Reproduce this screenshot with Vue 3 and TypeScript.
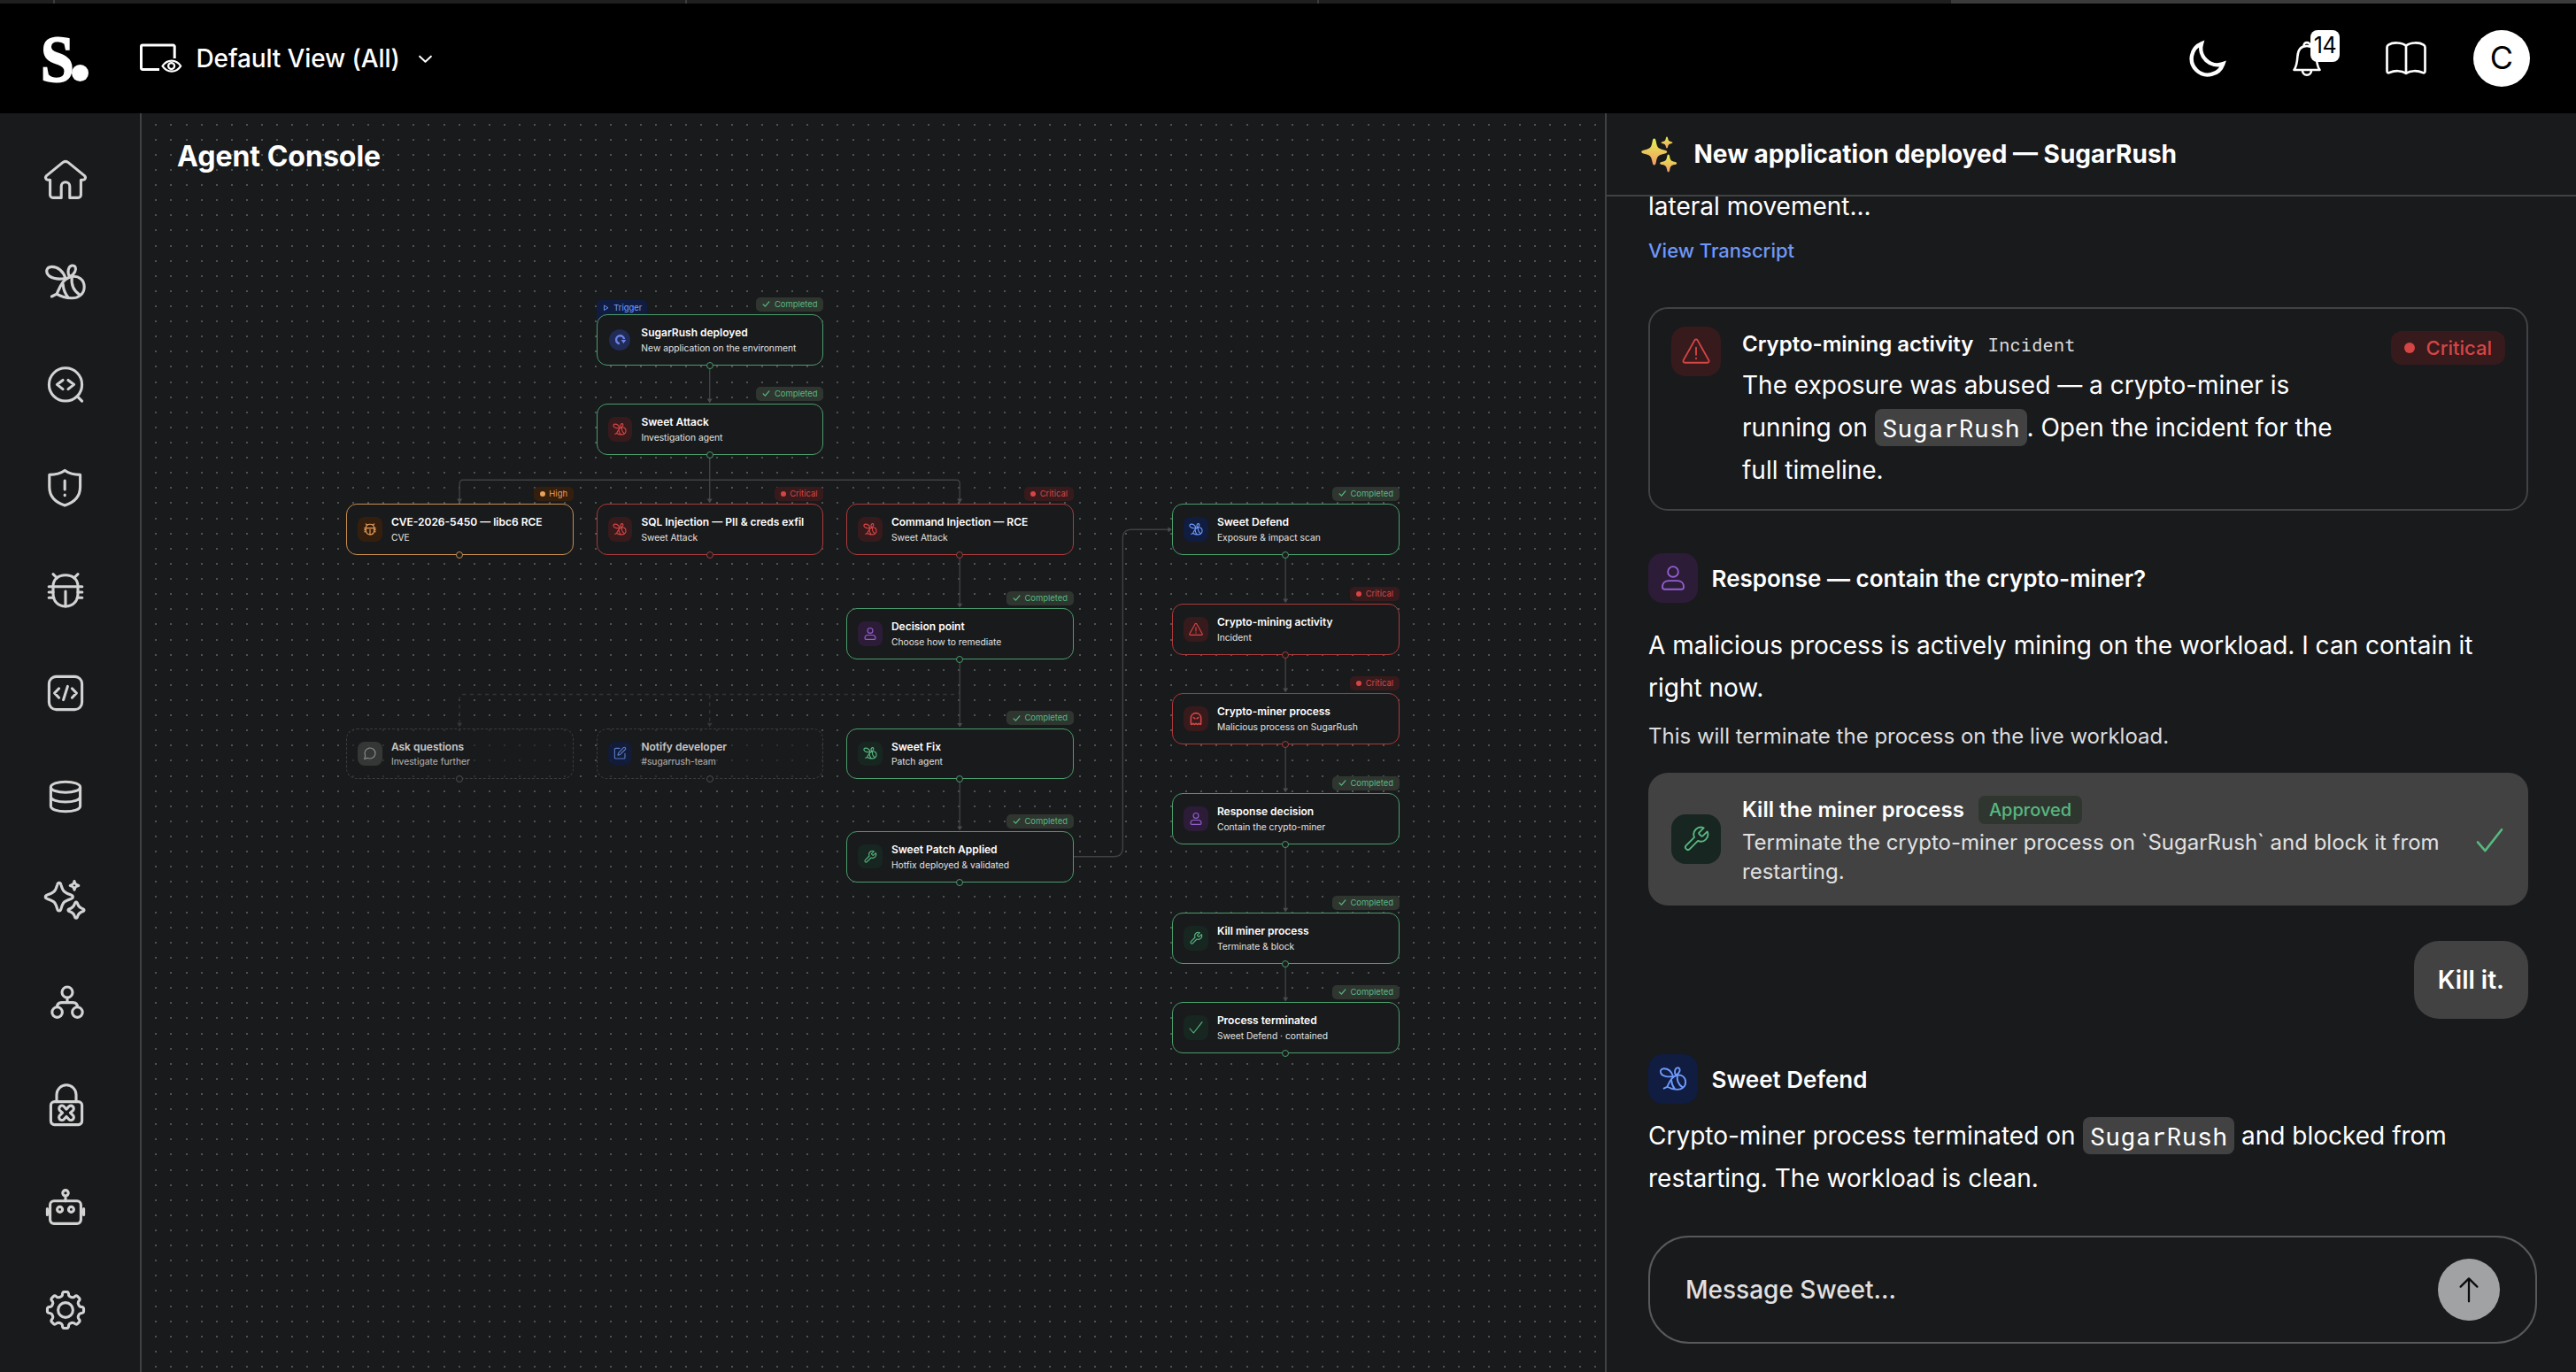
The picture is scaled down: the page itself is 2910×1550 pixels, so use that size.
<script setup lang="ts">
import { h } from 'vue'

/* ---------- icons (24 unit grid, stroked) ---------- */
const gear = (): string => {
  const pts: string[] = []
  const n = 8
  const step = (Math.PI * 2) / n
  const at = (r: number, a: number) => `${(12 + r * Math.cos(a)).toFixed(2)} ${(12 + r * Math.sin(a)).toFixed(2)}`
  for (let i = 0; i < n; i++) {
    const a = i * step - Math.PI / 2
    pts.push(`${i ? 'L' : 'M'}${at(8.1, a - step * 0.36)}`)
    pts.push(`Q${at(8.6, a - step * 0.24)} ${at(9.3, a - step * 0.24)}`)
    pts.push(`Q${at(10.3, a - step * 0.2)} ${at(10.3, a - step * 0.1)}`)
    pts.push(`L${at(10.3, a + step * 0.1)}`)
    pts.push(`Q${at(10.3, a + step * 0.2)} ${at(9.3, a + step * 0.24)}`)
    pts.push(`Q${at(8.6, a + step * 0.24)} ${at(8.1, a + step * 0.36)}`)
    pts.push(`Q${at(7.9, a + step * 0.5)} ${at(8.1, a + step * 0.64)}`)
  }
  return pts.join('') + 'Z'
}

const icons: Record<string, string[]> = {
  home: ['M9.6 22.2H4.9a1.6 1.6 0 0 1-1.6-1.6v-8.5H2C.8 12.1.4 10.7 1.2 9.8L10.4 2.3a2.6 2.6 0 0 1 3.2 0l9.2 7.5c.8.9.4 2.3-.8 2.3h-1.3v8.5a1.6 1.6 0 0 1-1.6 1.6h-4.7v-6.4a2.4 2.4 0 0 0-4.8 0z'],
  bee: [
    'M12 9.6C10.6 5.6 7.6 3.2 4.4 3.2 1.8 3.2.9 4.9 1.6 6.8 2.6 9.4 7.4 10.8 12 9.6z',
    'M14.4 8.8C12.8 6.6 13.4 3 15.6 2.5 17.6 2.2 18.2 4.2 17.4 5.8 16.8 7.2 15.6 8.2 14.4 8.8z',
    'M7 18.6C8.6 15.6 9.8 10.4 15 8.9 19.4 7.8 22.6 10.6 22.6 14.6 22.6 18.6 19.2 21 15.4 20.9 12.4 20.8 9.4 20 7 18.6zM7 18.6L4.2 20',
    'M10.6 13.2C10.8 16 11.8 18.4 13.4 20.4M15.6 9.2C15.2 13 16.6 16.8 20 19'
  ],
  scan: ['M21.3 11.7A9.3 9.3 0 1 1 2.7 11.7a9.3 9.3 0 0 1 18.6 0zM18.700 18.400l2.600 2.700', 'M10.5 9.2L7.2 11.700l3.300 2.600M13.500 9.200l3.300 2.500-3.300 2.600'],
  shield: ['M11.6 2.2C9.5 3.7 6.5 4.6 2.9 4.7v6.8c0 5.3 3.1 8.7 8.7 10.5 5.6-1.8 8.7-5.2 8.7-10.5V4.7c-3.6-.1-6.6-1-8.7-2.5z', 'M11.6 8v5M11.6 16v.4'],
  bug: ['M12 3.4c4.2 0 7 2.4 7 6.2v4c0 4.6-2.8 7.4-7 7.4s-7-2.8-7-7.4v-4c0-3.8 2.8-6.2 7-6.2z', 'M2.6 9.9h18.8M12 12.5V21M2.6 13H5M2.6 16.1h2.8M19 13h2.4M18.6 16.1h2.8M5 2.8L7.2 5M19 2.8L16.8 5'],
  code: ['M6.7 2.7h10.6a4 4 0 0 1 4 4v10.6a4 4 0 0 1-4 4H6.7a4 4 0 0 1-4-4V6.7a4 4 0 0 1 4-4z', 'M8.3 9.4L5.8 12l2.5 2.6M15.7 9.4l2.5 2.6-2.5 2.6M13.2 8.2l-2.4 7.6'],
  database: ['M3.7 6.6c0-1.8 3.7-3 8.3-3s8.3 1.2 8.3 3-3.7 3-8.3 3-8.3-1.2-8.3-3z', 'M3.7 6.6v10.8c0 1.8 3.7 3 8.3 3s8.3-1.2 8.3-3V6.6M3.7 12c0 1.8 3.7 3 8.3 3s8.3-1.2 8.3-3'],
  sparkles: [
    'M7.3 3.9c.4-1.6 1.8-1.6 2.2 0 1 3.6 1.8 4.4 5.6 5.6 1.4.5 1.4 1.7 0 2.2-3.8 1.2-4.6 2-5.6 5.6-.4 1.6-1.8 1.6-2.2 0-1-3.6-1.8-4.4-5.6-5.6-1.4-.5-1.4-1.7 0-2.2 3.8-1.2 4.6-2 5.6-5.6z',
    'M17 1.8c.4 1.6.8 2 2.4 2.4-1.6.4-2 .8-2.4 2.4-.4-1.6-.8-2-2.4-2.4 1.6-.4 2-.8 2.4-2.4z',
    'M18 13.5c.5 0 .7.5.9 1.3.5 1.5.9 1.9 2.4 2.4 1.6.5 1.6 1.3 0 1.8-1.5.5-1.9.9-2.4 2.4-.4 1.6-1.4 1.6-1.8 0-.5-1.5-.9-1.9-2.4-2.4-1.6-.5-1.6-1.3 0-1.8 1.5-.5 1.9-.9 2.4-2.4.2-.8.4-1.3.9-1.3z'
  ],
  network: ['M16 6.5a3 3 0 1 1-6 0 3 3 0 0 1 6 0zM10.2 17.8a2.9 2.9 0 1 1-5.8 0 2.9 2.9 0 0 1 5.8 0zM21.6 17.8a2.9 2.9 0 1 1-5.8 0 2.9 2.9 0 0 1 5.8 0z', 'M13 9.5v2.8M7.3 14.8c0-1.6 1-2.5 2.5-2.5h6.4c1.5 0 2.5.9 2.5 2.5'],
  lock: ['M5.7 10.3h13.6a2 2 0 0 1 2 2v9a2 2 0 0 1-2 2H5.7a2 2 0 0 1-2-2v-9a2 2 0 0 1 2-2z', 'M7 10.3V6.4a5.5 5.5 0 0 1 11 0v3.9', 'M12.5 14.6l1.3-1.5a1.6 1.6 0 0 1 2.4 2.2l-1.5 1.3 1.5 1.4a1.6 1.6 0 0 1-2.3 2.3l-1.4-1.6-1.4 1.6a1.6 1.6 0 0 1-2.3-2.3l1.5-1.4-1.5-1.3a1.6 1.6 0 0 1 2.4-2.2z'],
  robot: ['M5.5 8.4h13a2.2 2.2 0 0 1 2.2 2.2v8.4a2.2 2.2 0 0 1-2.2 2.2h-13a2.2 2.2 0 0 1-2.2-2.2v-8.4a2.2 2.2 0 0 1 2.2-2.2z', 'M13.6 3.9a1.6 1.6 0 1 1-3.2 0 1.6 1.6 0 0 1 3.2 0zM12 5.5v2.9M10.3 13.2a1.5 1.5 0 1 1-3 0 1.5 1.5 0 0 1 3 0zM16.7 13.2a1.5 1.5 0 1 1-3 0 1.5 1.5 0 0 1 3 0zM1.7 12.8v3.4M22.3 12.8v3.4M1.7 14.5h1.6M20.7 14.5h1.6'],
  settings: [gear(), 'M16.2 12a4.2 4.2 0 1 1-8.4 0 4.2 4.2 0 0 1 8.4 0z'],
  alert: ['M10.8 2.5c.6-.9 1.8-.9 2.4 0l9.5 16.9c.6 1.1 0 2.2-1.2 2.2h-19c-1.2 0-1.8-1.1-1.2-2.2z', 'M12 8.7v6.2M12 17.7v.5'],
  user: ['M16.4 6.7a4.4 4.4 0 1 1-8.8 0 4.4 4.4 0 0 1 8.8 0z', 'M3 19.5c0-3.3 2.3-5.2 5.2-5.2h7.6c2.9 0 5.2 1.9 5.2 5.2 0 1.3-.6 2.1-1.9 2.1H4.9C3.6 21.6 3 20.8 3 19.5z'],
  wrench: ['M14.7 6.3a1 1 0 0 0 0 1.4l1.6 1.6a1 1 0 0 0 1.4 0l3.77-3.77a6 6 0 0 1-7.94 7.94l-6.91 6.91a2.12 2.12 0 0 1-3-3l6.91-6.91a6 6 0 0 1 7.94-7.94l-3.76 3.76z'],
  check: ['M1.5 13.5l6.5 7.5L22.5 2.5'],
  tick: ['M3 13l6 6L21 5'],
  ghost: ['M4.5 21.5c-.8 0-1-.6-1-1.4V11C3.5 5.8 7 2.5 12 2.5s8.500 3.300 8.500 8.500v9.100c0 .8-.2 1.400-1 1.400-1.600 0-1.400-1.600-2.500-1.600s-.9 1.600-2.500 1.600-1.400-1.600-2.500-1.600-.9 1.600-2.500 1.600-1.400-1.600-2.500-1.600-.9 1.600-2.500 1.600z', 'M8 9.800l2.400 1.900M16 9.800l-2.400 1.900'],
  edit: ['M12 3.5H5.5a2 2 0 0 0-2 2v13.5a2 2 0 0 0 2 2H19a2 2 0 0 0 2-2V12.5', 'M18.4 2.6a2.1 2.1 0 0 1 3 3L12.5 14.5l-3.5.7.7-3.5z'],
  chat: ['M7.9 20A9 9 0 1 0 4 16.1L2.5 21.5z'],
  play: ['M6 4l13 8-13 8z'],
  arrowUp: ['M12 22V2.5M5 9.5l7-7 7 7'],
  chevron: ['M3 8l9 8.5L21 8']
}

const Icon = (props: { name: string }) =>
  h(
    'svg',
    { viewBox: '0 0 24 24', fill: 'none', stroke: 'currentColor', 'stroke-linecap': 'round', 'stroke-linejoin': 'round' },
    icons[props.name].map((d) => h('path', { d }))
  )
Icon.props = ['name']

const navItems = ['home', 'bee', 'scan', 'shield', 'bug', 'code', 'database', 'sparkles', 'network', 'lock', 'robot', 'settings']

/* ---------- flow canvas ---------- */
const ORIGIN = { x: 160, y: 128 }
const NODE_W = 256.8
const NODE_H = 57.6

type Tone = 'green' | 'red' | 'orange' | 'blue' | 'purple' | 'gray' | 'indigo'
interface FlowNode {
  id: string
  x: number
  y: number
  title: string
  sub: string
  icon: string
  tone: Tone
  border: 'ok' | 'crit' | 'high' | 'idle'
  badge?: 'Completed' | 'Critical' | 'High'
  trigger?: boolean
}

const COL = [391.2, 673.7, 956.2, 1324.2]
const nodes: FlowNode[] = [
  { id: 'deploy', x: COL[1], y: 355.3, title: 'SugarRush deployed', sub: 'New application on the environment', icon: 'swirl', tone: 'indigo', border: 'ok', badge: 'Completed', trigger: true },
  { id: 'attack', x: COL[1], y: 456.2, title: 'Sweet Attack', sub: 'Investigation agent', icon: 'bee', tone: 'red', border: 'ok', badge: 'Completed' },
  { id: 'cve', x: COL[0], y: 569.2, title: 'CVE-2026-5450 — libc6 RCE', sub: 'CVE', icon: 'bug', tone: 'orange', border: 'high', badge: 'High' },
  { id: 'sqli', x: COL[1], y: 569.2, title: 'SQL Injection — PII & creds exfil', sub: 'Sweet Attack', icon: 'bee', tone: 'red', border: 'crit', badge: 'Critical' },
  { id: 'rce', x: COL[2], y: 569.2, title: 'Command Injection — RCE', sub: 'Sweet Attack', icon: 'bee', tone: 'red', border: 'crit', badge: 'Critical' },
  { id: 'decision', x: COL[2], y: 687.4, title: 'Decision point', sub: 'Choose how to remediate', icon: 'user', tone: 'purple', border: 'ok', badge: 'Completed' },
  { id: 'ask', x: COL[0], y: 822.6, title: 'Ask questions', sub: 'Investigate further', icon: 'chat', tone: 'gray', border: 'idle' },
  { id: 'notify', x: COL[1], y: 822.6, title: 'Notify developer', sub: '#sugarrush-team', icon: 'edit', tone: 'blue', border: 'idle' },
  { id: 'fix', x: COL[2], y: 822.6, title: 'Sweet Fix', sub: 'Patch agent', icon: 'bee', tone: 'green', border: 'ok', badge: 'Completed' },
  { id: 'patch', x: COL[2], y: 939, title: 'Sweet Patch Applied', sub: 'Hotfix deployed & validated', icon: 'wrench', tone: 'green', border: 'ok', badge: 'Completed' },
  { id: 'defend', x: COL[3], y: 569.2, title: 'Sweet Defend', sub: 'Exposure & impact scan', icon: 'bee', tone: 'blue', border: 'ok', badge: 'Completed' },
  { id: 'mining', x: COL[3], y: 682.2, title: 'Crypto-mining activity', sub: 'Incident', icon: 'alert', tone: 'red', border: 'crit', badge: 'Critical' },
  { id: 'miner', x: COL[3], y: 783.2, title: 'Crypto-miner process', sub: 'Malicious process on SugarRush', icon: 'ghost', tone: 'red', border: 'crit', badge: 'Critical' },
  { id: 'response', x: COL[3], y: 896.2, title: 'Response decision', sub: 'Contain the crypto-miner', icon: 'user', tone: 'purple', border: 'ok', badge: 'Completed' },
  { id: 'kill', x: COL[3], y: 1031.4, title: 'Kill miner process', sub: 'Terminate & block', icon: 'wrench', tone: 'green', border: 'ok', badge: 'Completed' },
  { id: 'done', x: COL[3], y: 1132.4, title: 'Process terminated', sub: 'Sweet Defend · contained', icon: 'check', tone: 'green', border: 'ok', badge: 'Completed' }
]
const byId = Object.fromEntries(nodes.map((n) => [n.id, n]))

const pos = (n: FlowNode) => ({ left: `${n.x - ORIGIN.x}px`, top: `${n.y - ORIGIN.y}px` })

const cx = (id: string) => byId[id].x + NODE_W / 2 - 0.4
const bottom = (id: string) => byId[id].y + NODE_H
const head = (x: number, y: number) => `M${x - 3} ${y - 4.6}h6l-3 4.6z`

const straight: [string, string][] = [
  ['deploy', 'attack'], ['attack', 'sqli'], ['rce', 'decision'], ['decision', 'fix'], ['fix', 'patch'],
  ['defend', 'mining'], ['mining', 'miner'], ['miner', 'response'], ['response', 'kill'], ['kill', 'done']
]
const branchY = 542.3
const skipY = 784.5
const solid = [
  ...straight.map(([a, b]) => `M${cx(a)} ${bottom(a)}V${byId[b].y - 2}`),
  `M${cx('attack')} ${branchY}H${cx('cve') + 4}q-4 0-4 4V567`,
  `M${cx('attack')} ${branchY}H${cx('rce') - 4}q4 0 4 4V567`,
  `M${byId.patch.x + NODE_W} 967.7H1258.3q10 0 10-10V608.3q0-10 10-10H1322`
].join('')
const heads = [...straight.map(([, b]) => head(cx(b), byId[b].y - 1)), head(cx('cve'), 568.2), head(cx('rce'), 568.2), 'M1319.4 595.3v6l4.6-3z'].join('')
const dashed = [
  `M${cx('fix')} 780q0 4.5-4.5 4.5H${cx('notify') + 4}q-4 0-4 4V820`,
  `M${cx('notify')} ${skipY}H${cx('ask') + 4}q-4 0-4 4V820`
].join('')
const dashedHeads = head(cx('ask'), 821.4) + head(cx('notify'), 821.4)

const grid = (() => {
  let d = ''
  for (let r = 0; r < 83; r++) {
    const y = Math.round(140.62 + r * 17.115) - 1
    for (let c = 0; c < 96; c++) {
      d += `M${Math.round(176.32 + c * 17.115) - 1} ${y}h2v2h-2z`
    }
  }
  return d
})()
</script>

<template>
  <div class="app">
    <div class="strip">
      <i class="tab t1"></i><i class="tab t2"></i><i class="tab t3"></i><i class="tab t4"></i><i class="tab active"></i>
    </div>

    <header class="topbar">
      <div class="brand"><span class="brand-s">S</span><span class="brand-dot"></span></div>
      <div class="view">
        <svg class="view-icon" viewBox="0 0 48 34" fill="none" stroke="#fff" stroke-width="3">
          <path d="M39.2 17V3.5a1.5 1.5 0 0 0-1.5-1.5H3a1.5 1.5 0 0 0-1.5 1.5V28a1.5 1.5 0 0 0 1.5 1.5h19" />
          <path d="M25.5 25.7c5.5-8 15.5-8 20.7 0-5.2 8-15.2 8-20.7 0z" stroke-width="2.2" stroke-linejoin="round" />
          <circle cx="35.6" cy="25.6" r="3.5" stroke-width="2.2" />
        </svg>
        <span>Default View (All)</span>
        <Icon name="chevron" class="view-chevron" />
      </div>
      <div class="tools">
        <svg class="moon" viewBox="0 0 42 42" fill="none" stroke="#fff" stroke-width="4.4">
          <path d="M14 4.3A18.3 18.3 0 1 0 38.3 27.2 18.8 18.8 0 0 1 14 4.3z" />
        </svg>
        <div class="bell">
          <svg viewBox="0 0 32 41" fill="none" stroke="#fff" stroke-width="2.6" stroke-linejoin="round">
            <path d="M1.5 33H30.5C28 29.5 27 24 26.6 18 26.2 10 22.5 6 16 6S5.8 10 5.4 18C5 24 4 29.5 1.5 33z" />
            <path d="M11 33.5c0 3 2 5.2 5 5.2s5-2.2 5-5.2M12.6 6.3c-1-5.6 7.8-5.6 6.8 0" />
          </svg>
          <span class="count">14</span>
        </div>
        <svg class="book" viewBox="0 0 46 38" fill="none" stroke="#fff" stroke-width="2.7" stroke-linejoin="round">
          <path d="M23 4.6C18 .6 8 .6 3.2 3.6 2 4.4 1.5 5.2 1.5 6.4V33c0 2.3 1.2 2.7 2.8 2 6-2.6 13.7-2.4 18.7.8 5-3.2 12.7-3.4 18.7-.8 1.6.7 2.8.3 2.8-2V6.4c0-1.2-.5-2-1.7-2.8C38 .6 28 .6 23 4.6zM23 4.6V36" />
        </svg>
        <div class="avatar">C</div>
      </div>
    </header>

    <div class="main">
      <nav class="sidebar">
        <Icon v-for="n in navItems" :key="n" :name="n" class="nav-icon" />
      </nav>

      <section class="canvas">
        <svg class="layer" viewBox="160 128 1653 1422" width="1653" height="1422">
          <path :d="grid" fill="#4f5153" shape-rendering="crispEdges" />
          <path :d="dashed" fill="none" stroke="#323436" stroke-width="1.3" stroke-dasharray="4.3 4.3" />
          <path :d="dashedHeads" fill="#343638" />
          <path :d="solid" fill="none" stroke="#3f4143" stroke-width="1.4" />
          <path :d="heads" fill="#4a4c4e" />
        </svg>
        <h1 class="title">Agent Console</h1>

        <div v-for="n in nodes" :key="n.id" class="node-wrap" :style="pos(n)">
          <span v-if="n.trigger" class="trigger"><Icon name="play" />Trigger</span>
          <span v-if="n.badge" class="badge" :class="n.badge.toLowerCase()">
            <Icon v-if="n.badge === 'Completed'" name="tick" />
            <i v-else class="dot"></i>{{ n.badge }}
          </span>
          <div class="node" :class="n.border">
            <span class="tile" :class="[n.tone, { round: n.icon === 'swirl' }]">
              <svg v-if="n.icon === 'swirl'" viewBox="0 0 24 24" fill="none" stroke="currentColor">
                <path d="M10.5 20A8 8 0 1 1 19.6 11" />
                <path d="M13.5 12.5h10l-5 7z" fill="currentColor" stroke="none" />
              </svg>
              <Icon v-else :name="n.icon" :class="{ heavy: n.icon === 'ghost' }" />
            </span>
            <span class="labels">
              <b>{{ n.title }}</b>
              <span>{{ n.sub }}</span>
            </span>
          </div>
          <i class="handle" :class="n.border"></i>
        </div>
      </section>

      <aside class="panel">
        <div class="panel-head">
          <svg class="magic" viewBox="1854 153 42 41">
            <defs>
              <linearGradient id="magic" x1="0" y1="0" x2="0" y2="1">
                <stop offset="0" stop-color="#e3f24d" />
                <stop offset="1" stop-color="#f39a68" />
              </linearGradient>
            </defs>
            <g fill="url(#magic)">
              <path d="M1868.7 155.6c1.4 0 1.7 1.5 2.3 4.4 1.1 5.6 2.3 6.8 8 8.2 2.9.7 4.2 1.1 4.2 2.4s-1.3 1.7-4.2 2.4c-5.7 1.4-6.9 2.6-8 8.2-.6 2.9-.9 4.4-2.3 4.4s-1.7-1.5-2.3-4.4c-1.1-5.6-2.3-6.8-8-8.2-2.9-.7-4.2-1.1-4.2-2.4s1.3-1.7 4.2-2.4c5.7-1.4 6.9-2.6 8-8.2.6-2.9.9-4.4 2.3-4.4z" />
              <path d="M1883 153.6c.8 0 .9.9 1.2 2 .6 2.4 1 2.8 3.4 3.4 1.2.3 1.8.5 1.8 1.1s-.6.8-1.8 1.1c-2.4.6-2.8 1-3.4 3.4-.3 1.1-.4 2-1.2 2s-.9-.9-1.2-2c-.6-2.4-1-2.8-3.4-3.4-1.2-.3-1.8-.5-1.8-1.1s.6-.8 1.8-1.1c2.4-.6 2.8-1 3.4-3.4.3-1.1.4-2 1.2-2z" />
              <path d="M1884.7 173.5c1.1 0 1.2 1.2 1.6 2.9.8 3.6 1.7 4.4 5.2 5.3 1.8.4 2.7.8 2.7 1.7s-.9 1.3-2.7 1.7c-3.5.9-4.4 1.7-5.2 5.3-.4 1.7-.5 2.9-1.6 2.9s-1.2-1.2-1.6-2.9c-.8-3.6-1.7-4.4-5.2-5.3-1.8-.4-2.7-.8-2.7-1.7s.9-1.3 2.7-1.7c3.5-.9 4.4-1.7 5.2-5.3.4-1.7.5-2.9 1.6-2.9z" />
            </g>
          </svg>
          <h2>New application deployed — SugarRush</h2>
        </div>

        <div class="chat">
          <p class="body leading">lateral movement...</p>
          <a class="link">View Transcript</a>

          <div class="incident">
            <span class="tile big red"><Icon name="alert" /></span>
            <div class="incident-text">
              <div class="incident-title"><b>Crypto-mining activity</b><span class="mono">Incident</span></div>
              <p class="body">The exposure was abused — a crypto-miner is<br />running on <code>SugarRush</code>. Open the incident for the<br />full timeline.</p>
            </div>
            <span class="severity"><i></i>Critical</span>
          </div>

          <div class="speaker first"><span class="tile big purple"><Icon name="user" /></span><b>Response — contain the crypto-miner?</b></div>
          <p class="body question">A malicious process is actively mining on the workload. I can contain it<br />right now.</p>
          <p class="note">This will terminate the process on the live workload.</p>

          <div class="action">
            <span class="tile big green"><Icon name="wrench" /></span>
            <div class="action-text">
              <div class="action-title"><b>Kill the miner process</b><span class="approved">Approved</span></div>
              <p>Terminate the crypto-miner process on `SugarRush` and block it from<br />restarting.</p>
            </div>
            <Icon name="check" class="action-check" />
          </div>

          <div class="bubble">Kill it.</div>

          <div class="speaker"><span class="tile big blue"><Icon name="bee" /></span><b>Sweet Defend</b></div>
          <p class="body answer">Crypto-miner process terminated on <code>SugarRush</code> and blocked from<br />restarting. The workload is clean.</p>
        </div>

        <div class="composer">
          <span>Message Sweet...</span>
          <button class="send"><Icon name="arrowUp" /></button>
        </div>
      </aside>
    </div>
  </div>
</template>

<style>
html, body { margin: 0; background: #191a1c; overflow: hidden; }
</style>

<style scoped>
.app {
  width: 2910px;
  height: 1550px;
  display: flex;
  flex-direction: column;
  overflow: hidden;
  background: #191a1c;
  color: #fff;
  font-family: Inter, 'Liberation Sans', sans-serif;
}
p, h1, h2 { margin: 0; }
b { font-weight: 600; }

.strip { height: 4px; display: flex; background: #1f1f1f; flex: none; }
.tab { box-sizing: border-box; border-right: 2px solid #3d3d3d; }
.t1 { width: 62px; }
.t2 { width: 714px; }
.t3 { width: 714px; }
.t4 { width: 714px; border: 0; }
.tab.active { flex: 1; border: 0; background: #3b3b3b; }

.topbar { height: 124px; flex: none; display: flex; align-items: center; background: #000; padding: 0 52px 0 46px; }
.brand { width: 112px; height: 52px; display: flex; align-items: flex-end; }
.brand-s {
  width: 34px;
  height: 52px;
  font: 700 75px/52px 'Liberation Serif', serif;
  -webkit-text-stroke: 2px #fff;
  transform: translateY(1px) scaleX(0.9);
  transform-origin: 0 50%;
}
.brand-dot { width: 19px; height: 19px; border-radius: 50%; background: #fff; margin-left: 1px; }
.view { display: flex; align-items: center; font-size: 28px; font-weight: 500; letter-spacing: -0.12px; line-height: 40px; }
.view-icon { width: 48px; height: 34px; margin-right: 15.5px; }
.view-chevron { width: 17px; height: 17px; margin-left: 20.5px; stroke-width: 2.8; }
.tools { margin-left: auto; display: flex; align-items: center; }
.moon { width: 42px; height: 42px; }
.bell { position: relative; margin-left: 75px; width: 32px; height: 41px; }
.bell svg { width: 32px; height: 41px; display: block; }
.count {
  position: absolute;
  left: 20px;
  top: -12px;
  width: 33px;
  height: 36px;
  border-radius: 8px;
  background: #fff;
  color: #000;
  font-size: 25px;
  letter-spacing: -0.5px;
  line-height: 35px;
  text-align: center;
}
.book { width: 46px; height: 38px; margin-left: 73px; }
.avatar { width: 64px; height: 64px; margin-left: 53px; border-radius: 50%; background: #fff; color: #000; font-size: 36px; font-weight: 400; line-height: 62px; text-align: center; }

.main { flex: 1; display: flex; min-height: 0; }
.sidebar {
  box-sizing: border-box;
  width: 160px;
  flex: none;
  border-right: 2px solid #404142;
  display: flex;
  flex-direction: column;
  gap: 68.1px;
  padding: 51px 0 0 50px;
  color: #d3d3d3;
}
.nav-icon { width: 48px; height: 48px; flex: none; stroke-width: 1.55; overflow: visible; }

.canvas { position: relative; flex: 1; overflow: hidden; }
.layer { position: absolute; left: 0; top: 0; }
.title { position: relative; padding: 29px 0 0 40px; font-size: 32px; font-weight: 700; line-height: 40px; }

.node-wrap { position: absolute; width: 256.8px; height: 57.6px; }
.node {
  position: absolute;
  inset: 0;
  box-sizing: border-box;
  display: flex;
  align-items: center;
  border: 1.7px solid;
  border-radius: 12px;
  background: #191a1c;
  padding-left: 12px;
}
.node.ok { border-color: #4a9c6c; }
.node.crit { border-color: #ab3a3b; }
.node.high { border-color: #c98d4e; }
.node.idle { border: 1px dashed #3b3c3e; background: rgba(25, 26, 28, 0.6); }
.node.idle > * { opacity: 0.75; }
.tile { width: 27.4px; height: 27.4px; border-radius: 8px; display: flex; align-items: center; justify-content: center; flex: none; }
.tile svg { width: 16px; height: 16px; stroke-width: 1.7; }
.tile svg.heavy { stroke-width: 2.4; }
.tile.round { width: 24px; height: 24px; border-radius: 50%; margin: 0 1.7px; }
.tile.round svg { width: 13.5px; height: 13.5px; stroke-width: 4.2; }
.tile.big { width: 56px; height: 56px; border-radius: 16px; }
.tile.big svg { width: 32px; height: 32px; stroke-width: 1.4; }
.red { background: #371a1c; color: #d64545; }
.green { background: #172621; color: #58b881; }
.blue { background: #101c40; color: #6f9bff; }
.purple { background: #2c1c38; color: #935fd0; }
.orange { background: #341f0e; color: #e9a05a; }
.gray { background: #3f4140; color: #b0b0b0; }
.indigo { background: #202b56; color: #6d80e6; }
.labels { display: flex; flex-direction: column; margin-left: 10.3px; padding-top: 3px; white-space: nowrap; }
.labels b { font-size: 12px; line-height: 16.8px; }
.labels span { font-size: 10.29px; line-height: 17.8px; color: #e2e2e2; }

.badge {
  position: absolute;
  right: 0;
  top: -19.5px;
  height: 16px;
  box-sizing: border-box;
  display: flex;
  align-items: center;
  padding: 0 7px;
  border-radius: 5px;
  font-size: 9.43px;
  line-height: 16px;
}
.badge svg { width: 9px; height: 9px; stroke-width: 3.4; margin-right: 4.5px; }
.badge.completed { background: #2f3630; color: #58b881; }
.badge.critical { background: #371a1c; color: #d64545; }
.badge.high { background: #341f0e; color: #e9a05a; }
.dot { width: 6px; height: 6px; border-radius: 50%; background: currentColor; margin-right: 4.3px; }
.trigger {
  position: absolute;
  left: 0;
  top: -16px;
  height: 30px;
  width: 57.5px;
  border-radius: 5px 5px 0 0;
  background: #101c40;
  color: #7da0ff;
  font-size: 9.43px;
  line-height: 17.6px;
  white-space: nowrap;
}
.trigger svg { width: 7.5px; height: 7.5px; stroke-width: 2.8; margin: 0 4.3px 0 7.8px; vertical-align: -0.7px; }
.handle { position: absolute; left: 124px; bottom: -4px; width: 8px; height: 8px; box-sizing: border-box; border: 1.3px solid; border-radius: 50%; background: #191a1c; }
.handle.ok { border-color: #4a9c6c; }
.handle.crit { border-color: #ab3a3b; }
.handle.high { border-color: #c98d4e; }
.handle.idle { border-color: #4c4e50; }

.panel { box-sizing: border-box; width: 1097px; flex: none; border-left: 2px solid #404142; display: flex; flex-direction: column; }
.panel-head { height: 92px; flex: none; border-bottom: 2px solid #404142; display: flex; align-items: center; padding-left: 39px; }
.magic { width: 42px; height: 41px; margin-right: 17.5px; }
.panel-head h2 { font-size: 28px; font-weight: 700; line-height: 36px; }

.chat { flex: 1; min-height: 0; padding: 0 54px 0 47px; display: flex; flex-direction: column; align-items: stretch; }
.body { font-size: 28px; line-height: 48px; white-space: nowrap; }
.leading { line-height: 22px; margin-bottom: 13px; }
.link { margin-top: 12px; font-size: 22px; font-weight: 500; line-height: 28px; color: #6e98fa; }
code, .mono { font-family: 'Roboto Mono', 'DejaVu Sans Mono', monospace; }
code { font-size: 28px; letter-spacing: 0.5px; background: #424242; border-radius: 8px; padding: 2.5px 7.5px 2.5px 8px; margin-left: 0.5px; line-height: 36px; }

.incident { box-sizing: border-box; height: 230px; flex: none; margin-top: 50px; border: 2px solid #404245; border-radius: 22px; padding: 20px 24px; display: flex; align-items: flex-start; }
.incident-text { margin-left: 24px; flex: 1; }
.incident-title { display: flex; align-items: baseline; height: 39px; line-height: 39px; font-size: 24px; margin-bottom: 3px; }
.mono { font-size: 20px; letter-spacing: 0.35px; margin-left: 16.5px; color: #dcdcdc; }
.severity { display: flex; align-items: center; box-sizing: border-box; height: 38px; margin-top: 5px; padding: 0 15px; border-radius: 12px; background: #371a1c; color: #d64545; font-size: 22px; font-weight: 500; }
.severity i { width: 12px; height: 12px; border-radius: 50%; background: currentColor; margin-right: 13px; }

.speaker { display: flex; align-items: center; gap: 15.5px; margin-top: 40px; font-size: 26px; }
.speaker.first { margin-top: 48px; }
.question { margin-top: 24px; }
.note { margin-top: 14px; font-size: 24px; line-height: 34px; color: #dcdcdc; }
.action { box-sizing: border-box; height: 150px; flex: none; margin-top: 24px; border-radius: 22px; background: #424242; padding: 0 28px 0 26px; display: flex; align-items: center; }
.action-text { margin-left: 24px; padding-top: 4px; font-size: 24px; line-height: 32.5px; white-space: nowrap; }
.action-text p { margin-top: 5.5px; color: #e0e0e0; }
.action-title { display: flex; align-items: center; height: 32px; }
.approved { margin-left: 16px; height: 32px; line-height: 32px; padding: 0 12px; border-radius: 7px; background: #2f3630; color: #58b881; font-size: 20px; font-weight: 500; }
.action-check { width: 31px; height: 31px; margin-left: auto; margin-top: 3px; stroke-width: 2; color: #58b881; }
.bubble { align-self: flex-end; margin-top: 40px; height: 88px; line-height: 88px; padding: 0 27px; border-radius: 28px; background: #424242; font-size: 28px; font-weight: 600; flex: none; }
.answer { margin-top: 12px; }

.composer { box-sizing: border-box; width: 1004px; height: 122px; flex: none; margin: 0 0 32px 47px; border: 2px solid #58595b; border-radius: 46px; display: flex; align-items: center; justify-content: space-between; padding: 0 40px; font-size: 28px; font-weight: 500; color: #e0e0e0; }
.send { width: 70px; height: 70px; border: 0; padding: 0; border-radius: 50%; background: #a1a2a4; color: #0b0b0b; display: flex; align-items: center; justify-content: center; }
.send svg { width: 32px; height: 32px; stroke-width: 1.7; }
</style>
